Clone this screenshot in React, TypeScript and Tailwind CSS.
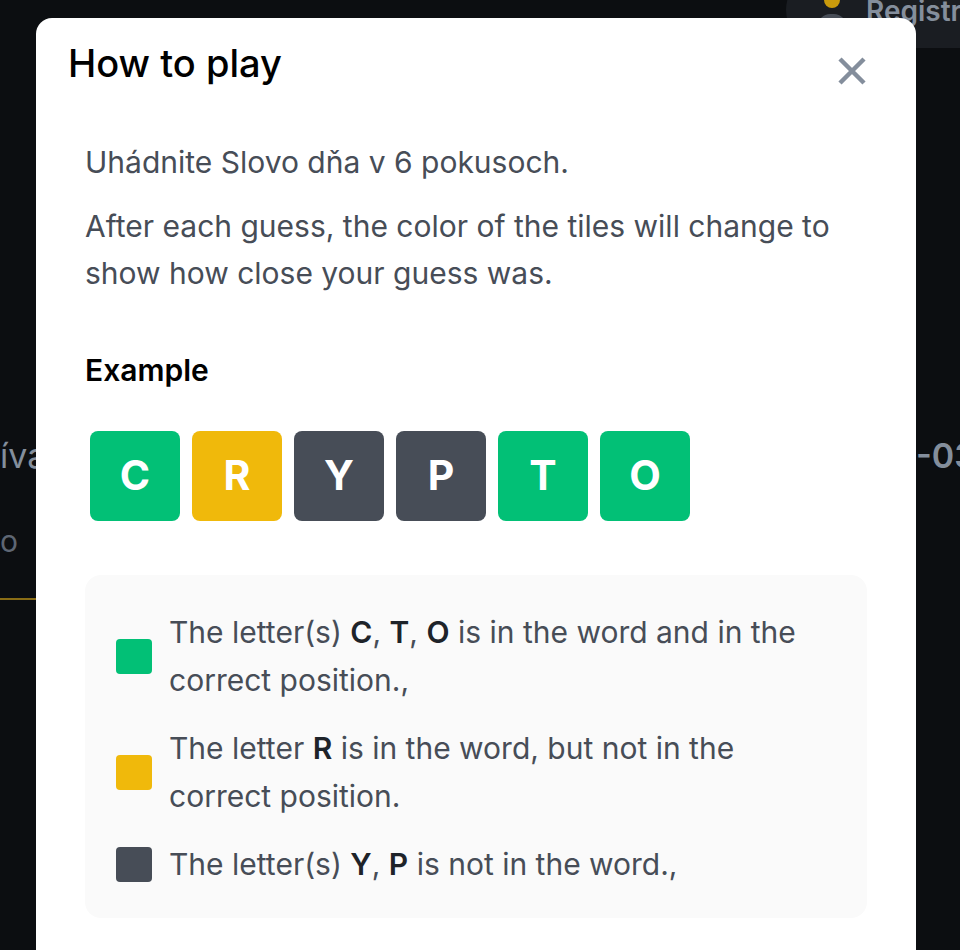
const tiles: { letter: string; color: string }[] = [
  { letter: 'C', color: 'bg-[#02c076]' },
  { letter: 'R', color: 'bg-[#f0b90b]' },
  { letter: 'Y', color: 'bg-[#474d57]' },
  { letter: 'P', color: 'bg-[#474d57]' },
  { letter: 'T', color: 'bg-[#02c076]' },
  { letter: 'O', color: 'bg-[#02c076]' },
]

function Legend({ color, children }: { color: string; children: React.ReactNode }) {
  return (
    <div className="flex items-center gap-[17px]">
      <span className={`h-[35px] w-[36px] shrink-0 rounded ${color}`} />
      <p className="text-[30px] leading-[48px] text-[#474d57]">{children}</p>
    </div>
  )
}

export default function App() {
  return (
    <div
      className="relative h-[950px] w-[960px] overflow-hidden bg-[#0c0e11]"
      style={{ fontFamily: 'Inter, "Noto Sans", sans-serif' }}
    >
      {/* Page behind the dialog */}
      <div className="flex justify-end">
        <div className="mt-[-28px] flex h-[76px] w-[174px] items-start gap-5 rounded-l-full bg-[#1a1d22] pl-8 pt-[20px]">
          <div className="flex flex-col items-center gap-[6px]">
            <span className="h-[16px] w-[16px] rounded-full bg-[#c99a0c]" />
            <span className="h-[12px] w-[28px] rounded-t-full bg-[#474d57]" />
          </div>
          <span className="mt-[-2px] whitespace-nowrap text-[28px] font-semibold text-[#848e9c]">Registrovať</span>
        </div>
      </div>
      <div className="mt-[382px] flex items-center justify-between">
        <span className="whitespace-nowrap text-[34px] text-[#848e9c]">ívať</span>
        <span className="w-[44px] overflow-hidden whitespace-nowrap text-[34px] font-semibold text-[#848e9c]">-03-15</span>
      </div>
      <div className="mt-[38px] text-[30px] text-[#5e6673]">o</div>
      <div className="mt-[34px] h-[2px] w-[40px] bg-[#8a6d16]" />

      {/* Dialog */}
      <div className="absolute left-[36px] top-[18px] h-[960px] w-[880px] rounded-2xl bg-white">
        <div className="flex items-start justify-between pl-8 pr-[50px] pt-[21px]">
          <h2 className="text-[38px] font-medium leading-[48px] text-black">How to play</h2>
          <button type="button" className="mt-[18px] text-[#848e9c]">
            <svg width="28" height="28" viewBox="0 0 28 28" fill="none" stroke="currentColor" strokeWidth={4.5}>
              <path d="M2 2L26 26M26 2L2 26" />
            </svg>
          </button>
        </div>

        <div className="px-[49px] pt-[52px]">
          <p className="text-[30px] leading-[47px] text-[#474d57]">Uhádnite Slovo dňa v 6 pokusoch.</p>
          <p className="mt-[17px] text-[30px] leading-[47px] text-[#474d57]">
            After each guess, the color of the tiles will change to show how close your guess was.
          </p>

          <h3 className="mt-[50px] text-[30px] font-semibold leading-[47px] text-black">Example</h3>

          <div className="mt-[37px] flex gap-3 pl-[5px]">
            {tiles.map((t, i) => (
              <div
                key={i}
                className={`flex h-[90px] w-[90px] items-center justify-center rounded-lg text-[41px] font-bold text-white ${t.color}`}
              >
                {t.letter}
              </div>
            ))}
          </div>

          <div className="mt-[54px] flex flex-col gap-[20px] rounded-2xl bg-[#fafafa] pb-[30px] pl-[31px] pr-[36px] pt-[33px]">
            <Legend color="bg-[#02c076]">
              The letter(s) <b className="font-semibold text-[#1e2329]">C</b>, <b className="font-semibold text-[#1e2329]">T</b>,{' '}
              <b className="font-semibold text-[#1e2329]">O</b> is in the word and in the correct position.,
            </Legend>
            <Legend color="bg-[#f0b90b]">
              The letter <b className="font-semibold text-[#1e2329]">R</b> is in the word, but not in the correct position.
            </Legend>
            <Legend color="bg-[#474d57]">
              The letter(s) <b className="font-semibold text-[#1e2329]">Y</b>, <b className="font-semibold text-[#1e2329]">P</b> is not in the word.,
            </Legend>
          </div>
        </div>
      </div>
    </div>
  )
}
